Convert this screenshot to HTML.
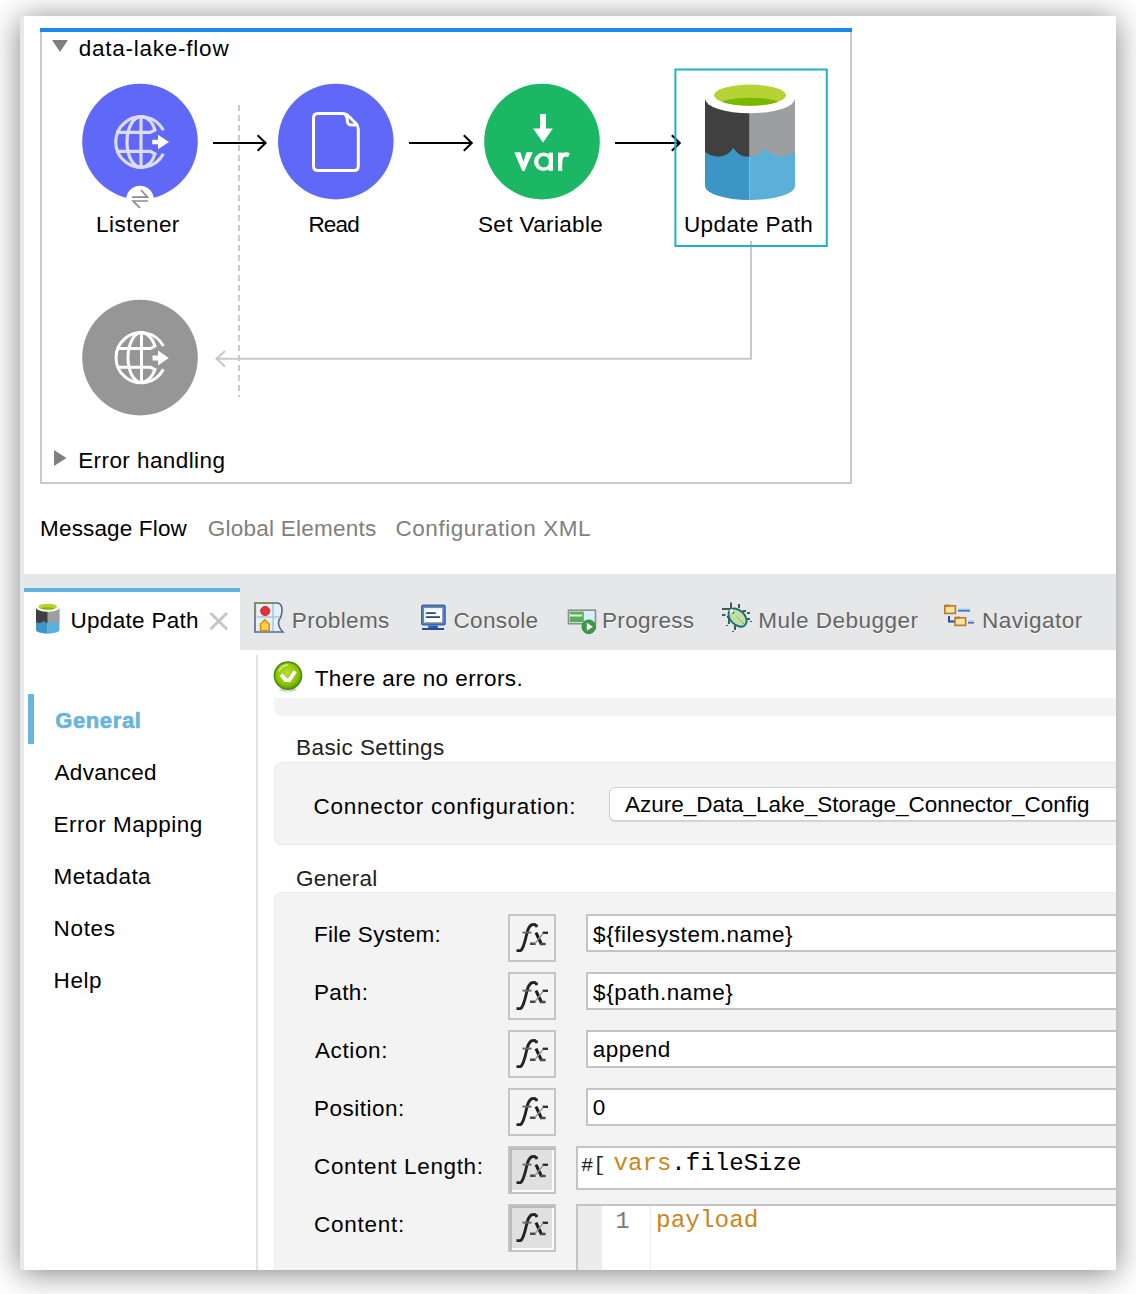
<!DOCTYPE html>
<html><head><meta charset="utf-8"><title>data-lake-flow</title>
<style>
html,body{margin:0;padding:0;width:1136px;height:1294px;overflow:hidden;background:#fff}
.t{position:absolute;white-space:nowrap;font-family:"Liberation Sans",sans-serif}
.a{position:absolute;box-sizing:border-box}
svg{position:absolute;left:0;top:0;overflow:visible}
.fx{position:absolute;width:48px;height:48px;box-sizing:border-box;border:2px solid #c6c6c6;background:#f3f3f3}
.fx.on{background:#e0e0e0;border-color:#c4c4c4;box-shadow:inset 2px 2px 0 #bababa, inset -2px -2px 0 #fafafa}
.fld{position:absolute;box-sizing:border-box;background:#fff;border:2px solid #c4c4c4;border-right:none}
</style></head><body>
<!-- window + shadow -->
<div class="a" style="left:20px;top:16px;width:1096px;height:1254px;background:#fff;box-shadow:0 3px 30px rgba(0,0,0,.5)"></div>
<div class="a" style="left:20px;top:16px;width:4px;height:1254px;background:#e7e8ea"></div>
<div id="clip" style="position:absolute;left:0;top:0;width:1116px;height:1270px;overflow:hidden">

<!-- flow container -->
<div class="a" style="left:40px;top:28px;width:812px;height:456px;border:2px solid #c9cacc;border-top:none"></div>
<div class="a" style="left:40px;top:28px;width:812px;height:4px;background:#1a8ae8"></div>

<!-- bottom editor tabs area -->
<div class="a" style="left:24px;top:574px;width:1092px;height:76px;background:#e6e7e9"></div>
<div class="a" style="left:24px;top:588px;width:216px;height:62px;background:#fff"></div>
<div class="a" style="left:24px;top:588px;width:216px;height:4px;background:#5fb1de"></div>

<!-- sidebar -->
<div class="a" style="left:28px;top:694px;width:6px;height:50px;background:#68b5e0"></div>
<div class="a" style="left:256px;top:655px;width:2px;height:615px;background:#e4e4e4"></div>

<!-- status strip -->
<div class="a" style="left:274px;top:698px;width:842px;height:18px;background:#f3f3f3;border-radius:0 0 0 8px"></div>
<!-- basic settings panel -->
<div class="a" style="left:274px;top:762px;width:862px;height:83px;background:#f3f3f3;border:1px solid #e9e9e9;border-radius:8px"></div>
<!-- combo -->
<div class="a" style="left:609px;top:787px;width:540px;height:33.5px;background:#fff;border:1px solid #cfcfcf;border-radius:6px;box-shadow:0 1px 1px rgba(0,0,0,.12)"></div>
<!-- general panel -->
<div class="a" style="left:274px;top:892px;width:862px;height:400px;background:#f3f3f3;border:1px solid #e9e9e9;border-radius:8px"></div>

<!-- fx buttons -->
<svg width="0" height="0" style="position:absolute"><defs><g id="fxg">
  <path d="M8.5,36.6 H13.6 M13.2,36.4 Q15.5,33 17,27 L19.5,17 Q21,12 24,10.6 L27.8,10.4 M28.3,10.2 V13.3" stroke="#222" stroke-width="2.9" fill="none" stroke-linejoin="round"/>
  <path d="M14.5,18.6 H23.5" stroke="#666" stroke-width="1.9"/>
  <path d="M28,18.6 L33.6,30.6" stroke="#1a1a1a" stroke-width="3.1"/>
  <path d="M34.6,18.8 H40" stroke="#2a2a2a" stroke-width="2.3"/>
  <path d="M22,29.7 H27.6 M32.2,30 H37.6" stroke="#4a4a4a" stroke-width="2.5"/>
  <path d="M35,19.5 L27,29.5" stroke="#999" stroke-width="1.3"/>
</g></defs></svg>

<div class="fx" style="left:508px;top:914px"><svg width="48" height="48" style="position:absolute;left:-2px;top:-2px"><use href="#fxg"/></svg></div>
<div class="fx" style="left:508px;top:972px"><svg width="48" height="48" style="position:absolute;left:-2px;top:-2px"><use href="#fxg"/></svg></div>
<div class="fx" style="left:508px;top:1030px"><svg width="48" height="48" style="position:absolute;left:-2px;top:-2px"><use href="#fxg"/></svg></div>
<div class="fx" style="left:508px;top:1088px"><svg width="48" height="48" style="position:absolute;left:-2px;top:-2px"><use href="#fxg"/></svg></div>
<div class="fx on" style="left:508px;top:1146px"><svg width="48" height="48" style="position:absolute;left:-2px;top:-2px"><use href="#fxg"/></svg></div>
<div class="fx on" style="left:508px;top:1204px"><svg width="48" height="48" style="position:absolute;left:-2px;top:-2px"><use href="#fxg"/></svg></div>

<!-- fields -->
<div class="fld" style="left:586px;top:914px;width:530px;height:38px"></div>
<div class="fld" style="left:586px;top:972px;width:530px;height:38px"></div>
<div class="fld" style="left:586px;top:1030px;width:530px;height:38px"></div>
<div class="fld" style="left:586px;top:1088px;width:530px;height:38px"></div>
<div class="fld" style="left:576px;top:1146px;width:540px;height:44px"></div>
<div class="fld" style="left:576px;top:1204px;width:540px;height:80px;border-bottom:none"></div>
<div class="a" style="left:578px;top:1206px;width:24px;height:64px;background:#ececec"></div>
<div class="a" style="left:650px;top:1206px;width:1px;height:64px;background:#ececec"></div>
<div class="t" style="left:615.5px;top:1209.5px;font-family:'Liberation Mono',monospace;font-size:23.5px;line-height:23px;color:#7a7a7a">1</div>
<div class="t" style="left:656px;top:1209px;font-family:'Liberation Mono',monospace;font-size:24.4px;line-height:23px;color:#c9861a">payload</div>
<div class="t" style="left:581px;top:1154px;font-family:'Liberation Mono',monospace;font-size:20.5px;line-height:23px;color:#222">#[</div>
<div class="t" style="left:613.5px;top:1152px;font-family:'Liberation Mono',monospace;font-size:24.1px;line-height:23px;color:#000"><span style="color:#c9861a">vars</span>.fileSize</div>

<!-- window bottom edge (content ends) -->
<div class="a" style="left:24px;top:1270px;width:1112px;height:24px;background:transparent"></div>

<svg width="1136" height="1294" viewBox="0 0 1136 1294">
  <!-- triangles -->
  <polygon points="52,40 68,40 60,52" fill="#808080"/>
  <polygon points="54,450 66.5,458 54,466" fill="#808080"/>

  <!-- dashed vertical line -->
  <line x1="239" y1="105" x2="239" y2="397" stroke="#c9cacd" stroke-width="2" stroke-dasharray="6,4"/>

  <!-- arrows -->
  <g stroke="#000" stroke-width="2" fill="none" stroke-linecap="butt">
    <line x1="213" y1="143" x2="265" y2="143"/><polyline points="257.6,135.2 265.6,143 257.6,150.8"/>
    <line x1="409" y1="143" x2="471" y2="143"/><polyline points="463.8,135.2 471.8,143 463.8,150.8"/>
    <line x1="615" y1="143" x2="679" y2="143"/><polyline points="671.8,135.2 679.8,143 671.8,150.8"/>
  </g>

  <!-- return path -->
  <g stroke="#c8c8c8" stroke-width="2" fill="none">
    <polyline points="751,241 751,358.7 217,358.7"/>
    <polyline points="225,351 216.5,358.7 225,366.4"/>
  </g>

  <!-- Listener circle -->
  <circle cx="140" cy="141.5" r="57.8" fill="#6068f7"/>
  <circle cx="140" cy="199.6" r="13.8" fill="#fff"/>
  <g stroke="#8c8c8c" stroke-width="1.7" fill="none">
    <polyline points="141,190 147.5,197.1 132.1,197.1"/>
    <polyline points="148,201 133.2,201 140,207.8"/>
  </g>
  <g id="globe" stroke="#dcdcf8" stroke-width="3.2" fill="none">
    <path d="M163.4,130.2 A25.3,25.3 0 1 0 163.4,153.8"/>
    <path d="M141,116.7 A14,25.3 0 0 0 141,167.3"/>
    <path d="M141,116.7 C147,117 152.5,122 155,130 L150.5,132.4 M141,167.3 C147,167 152.5,162 155,154 L150.5,151.4"/>
    <line x1="141" y1="116.5" x2="141" y2="167.5"/>
    <line x1="116" y1="132.4" x2="151" y2="132.4"/>
    <line x1="116" y1="151.4" x2="151" y2="151.4"/>
  </g>
  <polygon points="152.2,139.7 158,139.7 158,134.7 169,142 158,149.3 158,144.3 152.2,144.3" fill="#fff"/>

  <!-- Read circle -->
  <circle cx="335.8" cy="141.6" r="57.8" fill="#6068f7"/>
  <g stroke="#fff" stroke-width="3" fill="none" stroke-linejoin="round">
    <path d="M318,113.5 H342 Q346,113.5 348.5,116 L355.8,123.3 Q358.3,125.8 358.3,129.3 V166.1 Q358.3,170.6 353.8,170.6 H318 Q313.5,170.6 313.5,166.1 V118 Q313.5,113.5 318,113.5 Z"/>
    <path d="M344.8,114.4 Q347.3,116.3 347.3,119.5 V120.5 Q347.3,125 351.8,125 H356.8"/>
  </g>

  <!-- Set Variable circle -->
  <circle cx="542" cy="141.6" r="57.8" fill="#1bb765"/>
  <g fill="#fff">
    <rect x="540" y="114" width="6" height="15"/>
    <polygon points="533,128.4 552.9,128.4 543,142.4"/>
    <polygon points="514.3,152.3 520.4,152.3 523.4,161.8 526.5,152.3 532.7,152.3 524.5,170.9 522.3,170.9"/>
    <path fill-rule="evenodd" d="M543.5,152.5 A9.5,9.2 0 1 0 543.5,170.9 A9.5,9.2 0 1 0 543.5,152.5 Z M543.8,156 A5.5,5.7 0 1 1 543.8,167.4 A5.5,5.7 0 1 1 543.8,156 Z"/>
    <rect x="548.7" y="152.6" width="4.2" height="18.3"/>
    <rect x="558" y="152.6" width="4.2" height="18.3"/>
    <path d="M558,160 Q559,152.3 566,152.3 Q568.5,152.3 569.8,153.6 L568,157.2 Q567,156.6 566,156.6 Q562.2,156.6 562.2,163 Z"/>
  </g>

  <!-- Update Path selected box -->
  <rect x="675.4" y="69.5" width="151.4" height="176.5" fill="none" stroke="#1db0cf" stroke-width="2"/>

  <!-- Cylinder (flow) -->
  <g id="cyl">
    <path d="M705,98.6 V186 A45,14 0 0 0 749.5,200 V98.6 Z" fill="#3b96c6"/>
    <path d="M749.5,98.6 V200 A45,14 0 0 0 795,186 V98.6 Z" fill="#5ab0d8"/>
    <path d="M705,98.6 V152 Q712,157 720,156.6 Q728,156 733.3,148 Q739,156 745,156.5 L749.5,156.5 V98.6 Z" fill="#404040"/>
    <path d="M749.5,98.6 V156.5 Q758,156.5 765,148 Q771,156 780,156.6 Q788,157 795,152 V98.6 Z" fill="#9d9ea0"/>
    <ellipse cx="750" cy="98.6" rx="45" ry="14.7" fill="#fff"/>
    <clipPath id="cylclip"><ellipse cx="750" cy="95.2" rx="36" ry="10.6"/></clipPath>
    <ellipse cx="750" cy="95.2" rx="36" ry="10.6" fill="#b5d334"/>
    <ellipse cx="750" cy="104.6" rx="31" ry="6.8" fill="#7ab800" clip-path="url(#cylclip)"/>
  </g>

  <!-- error handler gray circle -->
  <circle cx="140" cy="357.6" r="57.8" fill="#969696"/>
  <g stroke="#fff" stroke-width="3" fill="none">
    <path d="M163.4,346.1 A25.1,25.1 0 1 0 163.4,369.3"/>
    <path d="M141.5,332.6 A13.5,25 0 0 0 141.5,382.6"/>
    <path d="M141.5,332.6 C147,333 152.5,338 155,346 L150.5,348.5 M141.5,382.6 C147,382 152.5,377 155,369.5 L150.5,367.3"/>
    <line x1="141.5" y1="332.5" x2="141.5" y2="383"/>
    <line x1="117" y1="348.5" x2="151" y2="348.5"/>
    <line x1="117" y1="367.3" x2="151" y2="367.3"/>
  </g>
  <polygon points="152.5,355.5 158,355.5 158,350.5 168.8,358 158,365.5 158,360.5 152.5,360.5" fill="#fff"/>

  <!-- tab icons -->
  <!-- small cylinder -->
  <g transform="translate(36,603) scale(0.26)">
    <path d="M0,20 V104 A45,14 0 0 0 45,118 V20 Z" fill="#3b96c6"/>
    <path d="M45,20 V118 A45,14 0 0 0 90,104 V20 Z" fill="#5ab0d8"/>
    <path d="M0,20 V72 Q8,78 16,77 Q24,76 29,68 Q35,76 41,77 L45,77 V20 Z" fill="#404040"/>
    <path d="M45,20 V77 Q53,77 60,68 Q66,76 75,77 Q83,78 90,72 V20 Z" fill="#9d9ea0"/>
    <ellipse cx="45" cy="18" rx="45" ry="16" fill="#fff"/>
    <clipPath id="cylclip2"><ellipse cx="45" cy="14" rx="36" ry="11"/></clipPath>
    <ellipse cx="45" cy="14" rx="36" ry="11" fill="#b5d334"/>
    <ellipse cx="45" cy="24" rx="31" ry="7.5" fill="#7ab800" clip-path="url(#cylclip2)"/>
  </g>
  <!-- close X -->
  <g stroke="#c6c6c6" stroke-width="3">
    <line x1="210.5" y1="613" x2="227" y2="629.3"/><line x1="227" y1="613" x2="210.5" y2="629.3"/>
  </g>
  <!-- problems icon -->
  <g>
    <path d="M255,603 H278 Q282,604 282,610 Q282,616 279,620 Q277,626 283,632 H255 Z" fill="#e3f1fb" stroke="#55688a" stroke-width="1.6"/>
    <path d="M255,603 H274" stroke="#8f8a55" stroke-width="1.8"/>
    <path d="M255.2,603 V618" stroke="#8f8a55" stroke-width="1.8"/>
    <line x1="257" y1="617" x2="280" y2="617" stroke="#a8c0e2" stroke-width="1.4"/>
    <line x1="273" y1="604" x2="273" y2="631" stroke="#a8c0e2" stroke-width="1.4"/>
    <circle cx="265.2" cy="611" r="4.6" fill="#e8323a" stroke="#c8141c" stroke-width="0.8"/>
    <path d="M260.5,630.5 V624 L264.8,619.8 L269.2,624 V630.5 Z" fill="#fcd64a" stroke="#e88a14" stroke-width="1.6"/>
  </g>
  <!-- console icon -->
  <g>
    <rect x="421" y="604.5" width="24.8" height="21" rx="2" fill="#2e6bbd"/>
    <rect x="422.5" y="606.3" width="21.5" height="17.5" fill="#7a859a"/>
    <rect x="424" y="608" width="18.2" height="14.3" fill="#fff"/>
    <rect x="424" y="608" width="18.2" height="1.6" fill="#d8f4ff"/>
    <rect x="424" y="608" width="1.8" height="14.3" fill="#d8f4ff"/>
    <rect x="426.1" y="612.2" width="9.7" height="1.8" fill="#34448a"/>
    <rect x="426.1" y="616.2" width="13.9" height="1.8" fill="#34448a"/>
    <rect x="428.2" y="625.5" width="9.6" height="2.5" fill="#2b5ea0"/>
    <rect x="422" y="628" width="22" height="2" fill="#1e4f98"/>
  </g>
  <!-- progress icon -->
  <g>
    <rect x="568.5" y="610.2" width="27" height="13.5" fill="#d7eefb" stroke="#8a8f8a" stroke-width="1.6"/>
    <rect x="569.8" y="611.6" width="14" height="10.5" fill="#58ae58"/>
    <rect x="570" y="614.5" width="12" height="2" fill="#eaf7e8"/>
    <circle cx="588.8" cy="626.8" r="6.8" fill="#3f9a48" stroke="#1f8a32" stroke-width="1"/>
    <polygon points="586.8,622.8 592.8,626.8 586.8,630.8" fill="#fff"/>
  </g>
  <!-- bug icon -->
  <g stroke="#2a5040" stroke-width="1.8" fill="none">
    <line x1="731" y1="602.5" x2="731" y2="609"/><line x1="722" y1="609" x2="730" y2="609"/>
    <line x1="739" y1="604" x2="739" y2="608"/><line x1="742.5" y1="611" x2="746" y2="611"/><line x1="747" y1="613" x2="750" y2="613"/>
    <line x1="722" y1="615" x2="725.5" y2="615"/><line x1="727" y1="617" x2="729" y2="617"/><line x1="729" y1="617" x2="729" y2="624"/><line x1="727" y1="625" x2="727" y2="626"/>
    <line x1="746" y1="619" x2="750" y2="619"/><line x1="751" y1="621" x2="751" y2="622"/>
    <line x1="735" y1="624" x2="735" y2="630"/><line x1="733" y1="631" x2="733" y2="632"/>
  </g>
  <ellipse cx="737.6" cy="617.6" rx="10.6" ry="7.2" transform="rotate(45 737.6 617.6)" fill="#bfe0a4" stroke="#1f6c80" stroke-width="1.9"/>
  <circle cx="733" cy="612.5" r="1.2" fill="#2f7a2f"/>
  <path d="M737,617 L744,624" stroke="#5aa85a" stroke-width="1.2" stroke-dasharray="1.2,1.6"/>
  <circle cx="731.5" cy="611" r="2" fill="#e8f6dc"/>
  <!-- navigator icon -->
  <g>
    <path d="M949,616 V621.5 H955" stroke="#1f4fa8" stroke-width="2" fill="none"/>
    <rect x="944.8" y="605.8" width="10.6" height="7.6" fill="#fbe39a" stroke="#b7792f" stroke-width="1.6"/>
    <rect x="944.8" y="604.6" width="5" height="2" fill="#b7792f"/>
    <rect x="955" y="617.8" width="10.6" height="7.6" fill="#fbe39a" stroke="#b7792f" stroke-width="1.6"/>
    <rect x="955" y="616.6" width="5" height="2" fill="#b7792f"/>
    <rect x="958" y="608" width="12" height="1.8" fill="#a6e6ff"/><rect x="958" y="609.8" width="12" height="1.8" fill="#4c72b0"/>
    <rect x="968" y="620" width="6" height="1.8" fill="#a6e6ff"/><rect x="968" y="621.8" width="6" height="1.8" fill="#4c72b0"/>
  </g>
  <!-- green check -->
  <defs>
    <radialGradient id="gck" cx="0.45" cy="0.4" r="0.6">
      <stop offset="0" stop-color="#b4e03a"/><stop offset="0.7" stop-color="#8cc400"/><stop offset="1" stop-color="#5c9a0c"/>
    </radialGradient>
  </defs>
  <ellipse cx="288" cy="689.6" rx="9" ry="2.2" fill="rgba(0,0,0,.18)"/>
  <circle cx="288" cy="675.6" r="13.5" fill="url(#gck)" stroke="#4f9010" stroke-width="1.8"/>
  <path d="M278.8,671.5 A10.5,10.5 0 0 1 288,665" stroke="#d6f08a" stroke-width="1.4" fill="none"/>
  <polyline points="281.2,674.6 285.6,680 289.4,680 295.2,671.2" stroke="#fff" stroke-width="3.8" fill="none" stroke-linejoin="miter"/>
</svg>

<div class="t" style="left:78.7px;top:37.7px;font-size:22.5px;line-height:22px;font-weight:400;color:#000;letter-spacing:0.76px;font-family:'Liberation Sans', sans-serif;">data-lake-flow</div>
<div class="t" style="left:96.1px;top:214.1px;font-size:22.5px;line-height:22px;font-weight:400;color:#000;letter-spacing:0.46px;font-family:'Liberation Sans', sans-serif;">Listener</div>
<div class="t" style="left:308.4px;top:213.7px;font-size:22.5px;line-height:22px;font-weight:400;color:#000;letter-spacing:-0.83px;font-family:'Liberation Sans', sans-serif;">Read</div>
<div class="t" style="left:478.0px;top:213.7px;font-size:22.5px;line-height:22px;font-weight:400;color:#000;letter-spacing:0.36px;font-family:'Liberation Sans', sans-serif;">Set Variable</div>
<div class="t" style="left:684.0px;top:214.2px;font-size:22.5px;line-height:22px;font-weight:400;color:#000;letter-spacing:0.37px;font-family:'Liberation Sans', sans-serif;">Update Path</div>
<div class="t" style="left:78.2px;top:450.0px;font-size:22.5px;line-height:22px;font-weight:400;color:#000;letter-spacing:0.42px;font-family:'Liberation Sans', sans-serif;">Error handling</div>
<div class="t" style="left:40.1px;top:517.6px;font-size:22.5px;line-height:22px;font-weight:400;color:#000;letter-spacing:0.15px;font-family:'Liberation Sans', sans-serif;">Message Flow</div>
<div class="t" style="left:207.8px;top:517.6px;font-size:22.5px;line-height:22px;font-weight:400;color:#808080;letter-spacing:0.24px;font-family:'Liberation Sans', sans-serif;">Global Elements</div>
<div class="t" style="left:395.5px;top:517.6px;font-size:22.5px;line-height:22px;font-weight:400;color:#808080;letter-spacing:0.54px;font-family:'Liberation Sans', sans-serif;">Configuration XML</div>
<div class="t" style="left:70.5px;top:610.1px;font-size:22.5px;line-height:22px;font-weight:400;color:#000;letter-spacing:0.30px;font-family:'Liberation Sans', sans-serif;">Update Path</div>
<div class="t" style="left:291.8px;top:609.8px;font-size:22.5px;line-height:22px;font-weight:400;color:#646464;letter-spacing:0.35px;font-family:'Liberation Sans', sans-serif;text-shadow:0 1px 0 #fff;">Problems</div>
<div class="t" style="left:453.5px;top:609.8px;font-size:22.5px;line-height:22px;font-weight:400;color:#646464;letter-spacing:0.34px;font-family:'Liberation Sans', sans-serif;text-shadow:0 1px 0 #fff;">Console</div>
<div class="t" style="left:602.1px;top:609.8px;font-size:22.5px;line-height:22px;font-weight:400;color:#646464;letter-spacing:0.27px;font-family:'Liberation Sans', sans-serif;text-shadow:0 1px 0 #fff;">Progress</div>
<div class="t" style="left:758.2px;top:609.8px;font-size:22.5px;line-height:22px;font-weight:400;color:#646464;letter-spacing:0.49px;font-family:'Liberation Sans', sans-serif;text-shadow:0 1px 0 #fff;">Mule Debugger</div>
<div class="t" style="left:982.0px;top:609.8px;font-size:22.5px;line-height:22px;font-weight:400;color:#646464;letter-spacing:0.50px;font-family:'Liberation Sans', sans-serif;text-shadow:0 1px 0 #fff;">Navigator</div>
<div class="t" style="left:55.2px;top:709.7px;font-size:22px;line-height:22px;font-weight:700;color:#68b4de;letter-spacing:0.63px;font-family:'Liberation Sans', sans-serif;-webkit-text-stroke:0.6px #68b4de;">General</div>
<div class="t" style="left:54.6px;top:762.2px;font-size:22.5px;line-height:22px;font-weight:400;color:#000;letter-spacing:0.26px;font-family:'Liberation Sans', sans-serif;">Advanced</div>
<div class="t" style="left:53.6px;top:814.2px;font-size:22.5px;line-height:22px;font-weight:400;color:#000;letter-spacing:0.51px;font-family:'Liberation Sans', sans-serif;">Error Mapping</div>
<div class="t" style="left:53.6px;top:866.1px;font-size:22.5px;line-height:22px;font-weight:400;color:#000;letter-spacing:0.46px;font-family:'Liberation Sans', sans-serif;">Metadata</div>
<div class="t" style="left:53.6px;top:918.0px;font-size:22.5px;line-height:22px;font-weight:400;color:#000;letter-spacing:0.67px;font-family:'Liberation Sans', sans-serif;">Notes</div>
<div class="t" style="left:53.6px;top:970.0px;font-size:22.5px;line-height:22px;font-weight:400;color:#000;letter-spacing:0.58px;font-family:'Liberation Sans', sans-serif;">Help</div>
<div class="t" style="left:314.7px;top:668.0px;font-size:22.5px;line-height:22px;font-weight:400;color:#000;letter-spacing:0.42px;font-family:'Liberation Sans', sans-serif;">There are no errors.</div>
<div class="t" style="left:296.0px;top:737.4px;font-size:22.5px;line-height:22px;font-weight:400;color:#222;letter-spacing:0.44px;font-family:'Liberation Sans', sans-serif;">Basic Settings</div>
<div class="t" style="left:313.6px;top:796.4px;font-size:22.5px;line-height:22px;font-weight:400;color:#000;letter-spacing:0.73px;font-family:'Liberation Sans', sans-serif;">Connector configuration:</div>
<div class="t" style="left:625.0px;top:794.0px;font-size:22.5px;line-height:22px;font-weight:400;color:#000;letter-spacing:-0.02px;font-family:'Liberation Sans', sans-serif;">Azure_Data_Lake_Storage_Connector_Config</div>
<div class="t" style="left:296.0px;top:868.3px;font-size:22.5px;line-height:22px;font-weight:400;color:#222;letter-spacing:0.19px;font-family:'Liberation Sans', sans-serif;">General</div>
<div class="t" style="left:313.9px;top:923.8px;font-size:22.5px;line-height:22px;font-weight:400;color:#000;letter-spacing:0.29px;font-family:'Liberation Sans', sans-serif;">File System:</div>
<div class="t" style="left:313.9px;top:981.7px;font-size:22.5px;line-height:22px;font-weight:400;color:#000;letter-spacing:0.38px;font-family:'Liberation Sans', sans-serif;">Path:</div>
<div class="t" style="left:314.9px;top:1040.0px;font-size:22.5px;line-height:22px;font-weight:400;color:#000;letter-spacing:0.64px;font-family:'Liberation Sans', sans-serif;">Action:</div>
<div class="t" style="left:314.0px;top:1098.0px;font-size:22.5px;line-height:22px;font-weight:400;color:#000;letter-spacing:0.49px;font-family:'Liberation Sans', sans-serif;">Position:</div>
<div class="t" style="left:314.0px;top:1155.6px;font-size:22.5px;line-height:22px;font-weight:400;color:#000;letter-spacing:0.63px;font-family:'Liberation Sans', sans-serif;">Content Length:</div>
<div class="t" style="left:314.0px;top:1213.7px;font-size:22.5px;line-height:22px;font-weight:400;color:#000;letter-spacing:0.74px;font-family:'Liberation Sans', sans-serif;">Content:</div>
<div class="t" style="left:593.1px;top:924.1px;font-size:22.5px;line-height:22px;font-weight:400;color:#000;letter-spacing:0.55px;font-family:'Liberation Sans', sans-serif;">${filesystem.name}</div>
<div class="t" style="left:593.1px;top:982.0px;font-size:22.5px;line-height:22px;font-weight:400;color:#000;letter-spacing:0.52px;font-family:'Liberation Sans', sans-serif;">${path.name}</div>
<div class="t" style="left:592.7px;top:1038.8px;font-size:22.5px;line-height:22px;font-weight:400;color:#000;letter-spacing:0.51px;font-family:'Liberation Sans', sans-serif;">append</div>
<div class="t" style="left:592.7px;top:1097.0px;font-size:22.5px;line-height:22px;font-weight:400;color:#000;letter-spacing:0.00px;font-family:'Liberation Sans', sans-serif;">0</div>
</div>
</body></html>
